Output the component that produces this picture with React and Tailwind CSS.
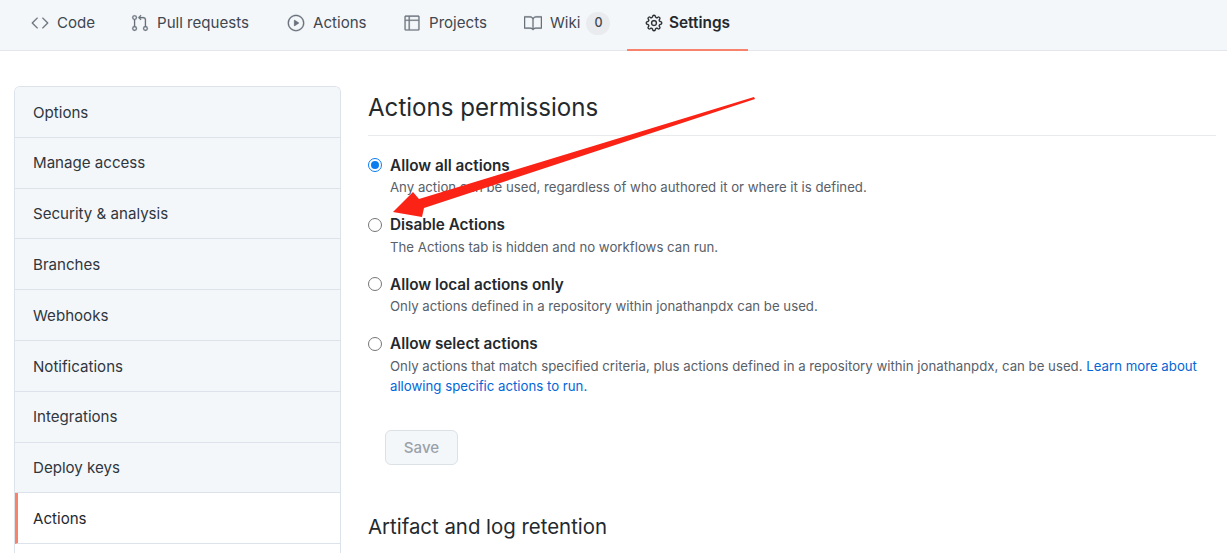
import React from "react";
import { GoCode, GoGitPullRequest, GoPlay, GoTable, GoBook, GoGear } from "react-icons/go";

const tabs = [
  { label: "Code", icon: GoCode, width: "w-[118px]", pad: "pl-[31px]" },
  { label: "Pull requests", icon: GoGitPullRequest, width: "w-[156px]", pad: "pl-[13px]" },
  { label: "Actions", icon: GoPlay, width: "w-[116px]", pad: "pl-[13px]" },
  { label: "Projects", icon: GoTable, width: "w-[121px]", pad: "pl-[13px]" },
];

const menu = [
  "Options",
  "Manage access",
  "Security & analysis",
  "Branches",
  "Webhooks",
  "Notifications",
  "Integrations",
  "Deploy keys",
];

const options = [
  {
    title: "Allow all actions",
    checked: true,
    desc: "Any action can be used, regardless of who authored it or where it is defined.",
  },
  {
    title: "Disable Actions",
    desc: "The Actions tab is hidden and no workflows can run.",
  },
  {
    title: "Allow local actions only",
    desc: "Only actions defined in a repository within jonathanpdx can be used.",
  },
];

const Radio = ({ checked }) =>
  checked ? (
    <span className="flex items-center justify-center w-[14px] h-[14px] rounded-full border-[1.5px] border-[#0a7cf0] bg-white shrink-0">
      <span className="w-[8px] h-[8px] rounded-full bg-[#0a7cf0]" />
    </span>
  ) : (
    <span className="w-[14px] h-[14px] rounded-full border border-[#767676] bg-white shrink-0" />
  );

const Option = ({ title, desc, checked, children }) => (
  <div className="flex flex-col">
    <div className="flex items-center h-[20px]">
      <Radio checked={checked} />
      <span className="ml-[8px] pt-[2px] font-semibold text-[15.3px] text-[#24292e]">{title}</span>
    </div>
    <p className="ml-[22px] mt-[2px] text-[13.22px] leading-[20px] text-[#586069]">
      {desc}
      {children}
    </p>
  </div>
);

const App = () => {
  return (
    <div className="relative w-[1227px] h-[553px] overflow-hidden bg-white text-[15.1px] text-[#24292e] font-['Inter','Liberation_Sans',sans-serif]">
      {/* repo tabs */}
      <div className="flex h-[51px] bg-[#f4f7fa] border-b border-[#e3e6ea]">
        {tabs.map((t) => (
          <div key={t.label} className={`flex items-center gap-[8px] shrink-0 pb-[4px] ${t.width} ${t.pad} text-[#3f4750]`}>
            <t.icon className="w-[18px] h-[18px] text-[#6a737d] stroke-[0.3px]" />
            <span>{t.label}</span>
          </div>
        ))}
        <div className="flex items-center gap-[8px] w-[116px] pl-[13px] pb-[4px] shrink-0 text-[#3f4750]">
          <GoBook className="w-[18px] h-[18px] text-[#6a737d] stroke-[0.3px]" />
          <span>Wiki</span>
          <span className="flex items-center justify-center -ml-[2px] w-[24px] h-[23px] rounded-full bg-[#e9ebee] text-[12.5px] font-medium">0</span>
        </div>
        <div className="flex items-center gap-[6px] pl-[18px] pb-[3px] w-[121px] shrink-0 h-[51px] border-b-2 border-[#f9826c] font-semibold text-[15.4px] text-[#24292e]">
          <GoGear className="w-[18px] h-[18px] stroke-[0.3px]" />
          <span>Settings</span>
        </div>
      </div>

      <div className="flex items-start pl-[14px] pt-[35px]">
        {/* sidebar */}
        <div className="w-[327px] shrink-0 rounded-t-[6px] border border-[#dde3ea] border-b-0 overflow-hidden">
          {menu.map((m) => (
            <div key={m} className="flex items-center h-[50.8px] pl-[18px] pt-[2px] bg-[#f4f7fa] border-b border-[#dde3ea] text-[#2f363d]">
              {m}
            </div>
          ))}
          <div className="flex items-center h-[50.8px] pl-[15px] pt-[3px] bg-white border-l-[3px] border-l-[#f9826c] border-b border-b-[#dde3ea] text-[#24292e]">
            Actions
          </div>
          <div className="h-[20px] bg-white" />
        </div>

        {/* content */}
        <div className="ml-[27px] pr-[11px] flex-1 min-w-0">
          <h2 className="text-[24.1px] leading-[32px] mt-[6px] pb-[11px] border-b border-[#e8eaec] text-[#24292e] font-normal">
            Actions permissions
          </h2>
          <div className="flex flex-col gap-[17.5px] mt-[19px]">
            {options.map((o) => (
              <Option key={o.title} {...o} />
            ))}
            <Option
              title="Allow select actions"
              desc="Only actions that match specified criteria, plus actions defined in a repository within jonathanpdx, can be used. "
            >
              <span className="text-[#0366d6]">Learn more about</span>
              <br />
              <span className="text-[#0366d6]">allowing specific actions to run.</span>
            </Option>
          </div>
          <button className="mt-[34px] ml-[17px] w-[73px] h-[35px] pt-[2px] rounded-[6px] bg-[#f4f7fa] border border-[#dce1e6] text-[#9aa1a9] font-medium">
            Save
          </button>
          <h3 className="mt-[48px] text-[20.4px] leading-[28px] font-normal text-[#24292e]">Artifact and log retention</h3>
        </div>
      </div>

      {/* red annotation arrow */}
      <svg className="absolute left-0 top-0 pointer-events-none" width="1227" height="553">
        <path d="M754 97 L755 99 L424 208 L422 217 L393 212 L413 192 L419 199 Z" fill="#fb2216" />
      </svg>
    </div>
  );
};

export default App;
